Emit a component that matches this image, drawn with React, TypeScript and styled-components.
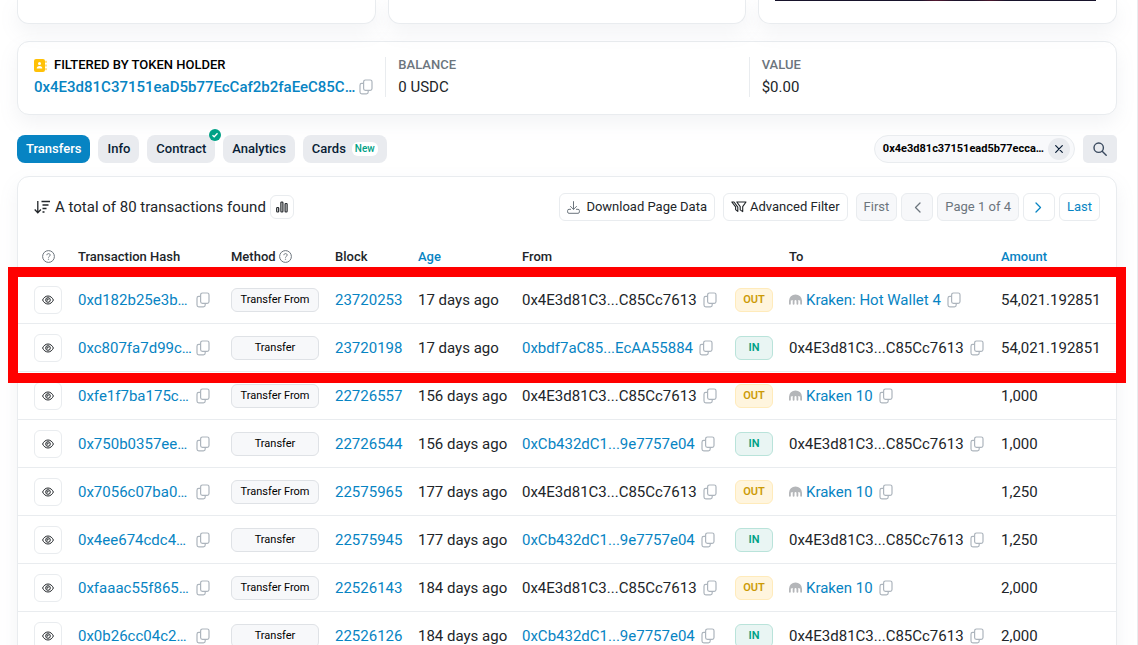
import React from "react";
import styled, { createGlobalStyle, css } from "styled-components";

const c = {
  link: "#0784c3",
  text: "#212529",
  muted: "#6c757d",
  line: "#e9ecef",
  soft: "#f7f8fa",
  tab: "#e9ebef",
  green: "#00a186",
};

const GlobalStyle = createGlobalStyle`
  * { box-sizing: border-box; }
  body {
    margin: 0;
    background: #fff;
    color: ${c.text};
    font-family: Roboto, "Liberation Sans", sans-serif;
    font-size: 15px;
    line-height: 20px;
  }
  button { font: inherit; color: inherit; cursor: pointer; }
  a { color: ${c.link}; text-decoration: none; }
  svg { display: block; flex: none; }
`;

const Page = styled.main`
  height: 100vh;
  overflow: hidden;
  padding: 0 20px 0 17px;
  border-right: 1px solid ${c.line};
`;

const cardLook = css`
  background: #fff;
  border: 1px solid ${c.line};
  border-radius: 12px;
  box-shadow: 0 8px 19px rgba(130, 140, 160, 0.1);
`;

const Summary = styled.section`
  display: grid;
  grid-template-columns: repeat(3, 1fr);
  gap: 12px;
`;

const SummaryCard = styled.div`
  ${cardLook}
  height: 24px;
  padding: 0 20px 0 16px;
  border-top: 0;
  border-radius: 0 0 12px 12px;
`;

const Banner = styled.div`
  height: 1px;
  background: linear-gradient(90deg, #17132b 0 45%, #54172f 50%, #1c132b 56% 62%, #4a162c 67%, #17132b 72%);
`;

const HolderCard = styled.section`
  ${cardLook}
  display: grid;
  grid-template-columns: repeat(3, 1fr);
  margin-top: 17px;
  padding: 15px 4px 17px;
`;

const HolderCell = styled.div`
  min-width: 0;
  padding: 0 12px;
  & + & { border-left: 1px solid ${c.line}; }
`;

const HolderLabel = styled.h2<{ $strong?: boolean }>`
  display: flex;
  align-items: center;
  gap: 7px;
  margin: 0 0 4px;
  font-size: 13px;
  line-height: 16px;
  font-weight: 500;
  color: ${(p) => (p.$strong ? "#000" : c.muted)};
`;

const HolderValue = styled.div`
  display: flex;
  align-items: center;
  justify-content: space-between;
  height: 20px;
  a { font-weight: 500; }
`;

const TabBar = styled.div`
  display: flex;
  align-items: center;
  justify-content: space-between;
  margin-top: 20px;
`;

const Tabs = styled.nav`
  display: flex;
  gap: 8px;
`;

const Tab = styled.button<{ $active?: boolean }>`
  position: relative;
  display: flex;
  align-items: center;
  gap: 6px;
  height: 28px;
  padding: 0 9px;
  border: 0;
  border-radius: 8px;
  font-size: 13px;
  font-weight: 500;
  color: ${(p) => (p.$active ? "#fff" : "#081d35")};
  background: ${(p) => (p.$active ? c.link : c.tab)};
`;

const NewPill = styled.span`
  padding: 0 3px;
  border-radius: 6px;
  background: #fff;
  color: ${c.green};
  font-size: 10px;
  line-height: 14px;
`;

const Verified = styled.span`
  position: absolute;
  top: -6px;
  right: -6px;
`;

const SearchGroup = styled.div`
  display: flex;
  align-items: center;
  gap: 8px;
`;

const Chip = styled.div`
  display: flex;
  align-items: center;
  gap: 4px;
  height: 28px;
  padding: 0 4px 0 8px;
  border: 1px solid ${c.line};
  border-radius: 14px;
  background: #f8f9fb;
  color: #000;
  font-size: 11px;
  font-weight: 700;
`;

const ClearButton = styled.button`
  display: grid;
  place-items: center;
  width: 22px;
  height: 22px;
  padding: 0;
  border: 0;
  border-radius: 50%;
  background: ${c.tab};
`;

const SearchButton = styled.button`
  display: grid;
  place-items: center;
  width: 34px;
  height: 28px;
  padding: 0;
  border: 0;
  border-radius: 5px;
  background: ${c.tab};
`;

const TransfersCard = styled.section`
  ${cardLook}
  margin-top: 13px;
`;

const Toolbar = styled.div`
  display: flex;
  align-items: center;
  justify-content: space-between;
  padding: 16px;
`;

const Total = styled.div`
  display: flex;
  align-items: center;
  gap: 4px;
`;

const SquareButton = styled.button<{ $size: number }>`
  display: grid;
  place-items: center;
  width: ${(p) => p.$size}px;
  height: ${(p) => p.$size}px;
  padding: 0;
  border: 1px solid ${c.line};
  border-radius: 6px;
  background: #fff;
`;

const Actions = styled.div`
  display: flex;
  gap: 8px;
`;

const Pager = styled.nav`
  display: flex;
  gap: 4px;
`;

const ToolButton = styled.button<{ $link?: boolean; $tight?: boolean }>`
  display: flex;
  align-items: center;
  justify-content: center;
  gap: ${(p) => (p.$tight ? 3 : 6)}px;
  height: 28px;
  min-width: 32px;
  padding: 0 7px;
  border: 1px solid ${c.line};
  border-radius: 6px;
  background: #fff;
  font-size: 13px;
  color: ${(p) => (p.$link ? c.link : c.text)};
  white-space: nowrap;
  &:disabled { background: ${c.soft}; color: ${c.muted}; cursor: default; }
`;

const TableArea = styled.div`
  position: relative;
`;

const Table = styled.table`
  width: 100%;
  border-collapse: separate;
  border-spacing: 0;
  table-layout: fixed;
`;

const Head = styled.th<{ $link?: boolean }>`
  height: 39px;
  padding: 0 8px;
  text-align: left;
  font-size: 13px;
  font-weight: 500;
  white-space: nowrap;
  color: ${(p) => (p.$link ? c.link : c.text)};
  &:first-child { padding: 0 8px 0 16px; }
`;

const Cell = styled.td`
  height: 48px;
  padding: 0 8px;
  border-bottom: 1px solid ${c.line};
  white-space: nowrap;
  &:first-child { padding-left: 16px; }
`;

const HeadInner = styled.span<{ $center?: boolean }>`
  display: flex;
  align-items: center;
  gap: 3px;
  justify-content: ${(p) => (p.$center ? "center" : "flex-start")};
`;

const Inline = styled.span<{ $tight?: boolean }>`
  display: flex;
  align-items: center;
  gap: ${(p) => (p.$tight ? 4 : 6)}px;
`;

const HashLine = styled.span`
  display: flex;
  align-items: center;
  justify-content: space-between;
  width: 132px;
`;

const Method = styled.span`
  display: block;
  width: 88px;
  border: 1px solid #dfe2e6;
  border-radius: 6px;
  background: ${c.soft};
  color: #000;
  font-size: 11px;
  line-height: 22px;
  text-align: center;
`;

const Direction = styled.span<{ $out: boolean }>`
  display: block;
  width: 38px;
  border: 1px solid ${(p) => (p.$out ? "#ffebbb" : "#b9e3da")};
  border-radius: 6px;
  background: ${(p) => (p.$out ? "#fff5de" : "#e9f5f3")};
  color: ${(p) => (p.$out ? "#cc9a06" : c.green)};
  font-size: 11px;
  font-weight: 600;
  line-height: 22px;
  text-align: center;
`;

const IconButton = styled.button`
  display: block;
  padding: 0;
  border: 0;
  background: none;
  color: #adb5bd;
`;

const Highlight = styled.div`
  position: absolute;
  top: 30px;
  left: -10px;
  right: -10px;
  height: 116px;
  border: 10px solid #f00;
  pointer-events: none;
`;

const CopyIcon = () => (
  <svg width="14" height="16" viewBox="0 0 14 16" fill="none" stroke="currentColor" strokeWidth="1.2">
    <rect x="4.6" y="1" width="8.4" height="10.4" rx="1.8" />
    <path d="M4.6 4.4H2.8A1.8 1.8 0 0 0 1 6.2v6.8a1.8 1.8 0 0 0 1.8 1.8h4.6A1.8 1.8 0 0 0 9.2 13v-1.6" />
  </svg>
);

const Copy = () => (
  <IconButton type="button" aria-label="Copy address">
    <CopyIcon />
  </IconButton>
);

const EyeIcon = () => (
  <svg width="12" height="10" viewBox="0 0 12 10" fill="none" stroke="currentColor" strokeWidth="1">
    <path d="M.6 5C1.7 2.6 3.6 1 6 1s4.300 1.600 5.400 4C10.300 7.400 8.400 9 6 9S1.700 7.400.6 5Z" />
    <circle cx="6" cy="5" r="2.300" />
    <path d="M6 3.600v1.400H4.600" />
  </svg>
);

const HelpIcon = () => (
  <svg width="13" height="13" viewBox="0 0 13 13" fill="none" stroke="#6c757d" strokeWidth="1">
    <circle cx="6.500" cy="6.500" r="5.900" />
    <path d="M4.900 5.200c0-1 .7-1.600 1.600-1.600s1.700.6 1.700 1.500c0 1.200-1.700 1.200-1.700 2.500" />
    <circle cx="6.500" cy="9.200" r=".35" fill="#6c757d" strokeWidth=".5" />
  </svg>
);

const ContactIcon = () => (
  <svg width="13" height="13" viewBox="0 0 13 13">
    <rect x="0" y="0" width="11" height="13" rx="2" fill="#ffc107" />
    <path d="M12 1.800v2M12 5.500v2M12 9.200v2" stroke="#ffc107" strokeWidth="1" />
    <circle cx="5.500" cy="4.600" r="1.500" fill="#fff" />
    <path d="M2.700 9.600c0-1.500 1-2.500 2.800-2.500s2.800 1 2.800 2.500Z" fill="#fff" />
  </svg>
);

const CheckIcon = () => (
  <svg width="12" height="12" viewBox="0 0 12 12">
    <circle cx="6" cy="6" r="6" fill="#00a186" />
    <path d="m3.500 6.200 1.700 1.600 3.300-3.500" fill="none" stroke="#fff" strokeWidth="1.300" />
  </svg>
);

const CloseIcon = () => (
  <svg width="8" height="8" viewBox="0 0 8 8" stroke="#081d35" strokeWidth="1.200" strokeLinecap="round">
    <path d="M.7.7 7.300 7.300M7.300.7.7 7.300" />
  </svg>
);

const SearchIcon = () => (
  <svg width="14" height="14" viewBox="0 0 14 14" fill="none" stroke="#3a4a5f" strokeWidth="1.400" strokeLinecap="round">
    <circle cx="5.700" cy="5.700" r="4.700" />
    <path d="m9.200 9.200 4 4" />
  </svg>
);

const SortIcon = () => (
  <svg width="17" height="14" viewBox="0 0 17 14" fill="none" stroke="currentColor" strokeWidth="1.300">
    <path d="M3.800 1v11.500M.7 9.500l3.100 3.200 3.100-3.200M7.500 1.500H16M8.500 5h6M8.500 8.500h4M8.500 12h2" />
  </svg>
);

const ChartIcon = () => (
  <svg width="12" height="12" viewBox="0 0 12 12" fill="none" stroke="currentColor" strokeWidth="1.200">
    <rect x=".7" y="6.500" width="2" height="4.500" rx=".8" />
    <rect x="4.900" y="1" width="2" height="10" rx=".8" />
    <rect x="9.100" y="2.500" width="2" height="8.500" rx=".8" />
  </svg>
);

const DownloadIcon = () => (
  <svg width="13" height="13" viewBox="0 0 13 13" fill="none" stroke="#6c757d" strokeWidth="1" strokeLinecap="round" strokeLinejoin="round">
    <path d="M6.500.6v7.600M3.500 5.400l3 3 3-3" />
    <path d="M3.600 8.300H2A1.400 1.400 0 0 0 .6 9.700v1.200A1.400 1.400 0 0 0 2 12.300h9a1.400 1.400 0 0 0 1.400-1.400V9.700A1.400 1.400 0 0 0 11 8.300H9.400" />
  </svg>
);

const FilterIcon = () => (
  <svg width="16" height="12" viewBox="0 0 16 12" fill="none" stroke="currentColor" strokeWidth="1.100" strokeLinejoin="round" strokeLinecap="round">
    <path d="M5.800 1H15l-3.300 4.600v5L9.200 8.900V5.600Z" />
    <path d="M3 1H.8l3.800 4.900v2.700l2.200 1.800V6.100L3 1" />
  </svg>
);

const Chevron = ({ right }: { right?: boolean }) => (
  <svg width="7" height="11" viewBox="0 0 7 11" fill="none" stroke="currentColor" strokeWidth="1.300" strokeLinecap="round" strokeLinejoin="round">
    <path d={right ? "m1 1 4.500 4.500L1 10" : "M6 1 1.500 5.500 6 10"} />
  </svg>
);

const KrakenIcon = () => (
  <svg width="13" height="11" viewBox="0 0 13 11" fill="none" stroke="#b4b6b9" strokeWidth="1.800" strokeLinecap="round">
    <path d="M0 6.800a6.500 6.300 0 0 1 13 0H10.800a1 1 0 0 0-1.900 0H7.400a.9.900 0 0 0-1.800 0H4.100a1 1 0 0 0-1.900 0Z" fill="#b4b6b9" stroke="none" />
    <path d="M.9 6.800v3M4.600 6.800v3M8.400 6.800v3M12.100 6.800v3" />
  </svg>
);

type Transfer = {
  hash: string;
  block: string;
  age: string;
  out: boolean;
  party: string;
  amount: string;
};

const HOLDER = "0x4E3d81C3...C85Cc7613";

const transfers: Transfer[] = [
  { hash: "0xd182b25e3b…", block: "23720253", age: "17 days ago", out: true, party: "Kraken: Hot Wallet 4", amount: "54,021.192851" },
  { hash: "0xc807fa7d99c…", block: "23720198", age: "17 days ago", out: false, party: "0xbdf7aC85...EcAA55884", amount: "54,021.192851" },
  { hash: "0xfe1f7ba175c…", block: "22726557", age: "156 days ago", out: true, party: "Kraken 10", amount: "1,000" },
  { hash: "0x750b0357ee…", block: "22726544", age: "156 days ago", out: false, party: "0xCb432dC1...9e7757e04", amount: "1,000" },
  { hash: "0x7056c07ba0…", block: "22575965", age: "177 days ago", out: true, party: "Kraken 10", amount: "1,250" },
  { hash: "0x4ee674cdc4…", block: "22575945", age: "177 days ago", out: false, party: "0xCb432dC1...9e7757e04", amount: "1,250" },
  { hash: "0xfaaac55f865…", block: "22526143", age: "184 days ago", out: true, party: "Kraken 10", amount: "2,000" },
  { hash: "0x0b26cc04c2…", block: "22526126", age: "184 days ago", out: false, party: "0xCb432dC1...9e7757e04", amount: "2,000" },
];

const Col = styled.col<{ $w: number }>`
  width: ${(p) => p.$w}px;
`;

const columnWidths = [52, 153, 104, 83, 104, 213, 54, 212, 123];

const Row = ({ t }: { t: Transfer }) => (
  <tr>
    <Cell>
      <SquareButton type="button" $size={28} aria-label="Preview transaction">
        <EyeIcon />
      </SquareButton>
    </Cell>
    <Cell>
      <HashLine>
        <a href="#tx">{t.hash}</a>
        <Copy />
      </HashLine>
    </Cell>
    <Cell>
      <Method>{t.out ? "Transfer From" : "Transfer"}</Method>
    </Cell>
    <Cell>
      <a href="#block">{t.block}</a>
    </Cell>
    <Cell>{t.age}</Cell>
    <Cell>
      <Inline>
        {t.out ? <span>{HOLDER}</span> : <a href="#from">{t.party}</a>}
        <Copy />
      </Inline>
    </Cell>
    <Cell>
      <Direction $out={t.out}>{t.out ? "OUT" : "IN"}</Direction>
    </Cell>
    <Cell>
      <Inline>
        {t.out ? (
          <Inline $tight>
            <KrakenIcon />
            <a href="#to">{t.party}</a>
          </Inline>
        ) : (
          <span>{HOLDER}</span>
        )}
        <Copy />
      </Inline>
    </Cell>
    <Cell>{t.amount}</Cell>
  </tr>
);

export default function App() {
  return (
    <>
      <GlobalStyle />
      <Page>
        <Summary>
          <SummaryCard />
          <SummaryCard />
          <SummaryCard>
            <Banner />
          </SummaryCard>
        </Summary>

        <HolderCard>
          <HolderCell>
            <HolderLabel $strong>
              <ContactIcon />
              FILTERED BY TOKEN HOLDER
            </HolderLabel>
            <HolderValue>
              <a href="#holder">0x4E3d81C37151eaD5b77EcCaf2b2faEeC85C…</a>
              <Copy />
            </HolderValue>
          </HolderCell>
          <HolderCell>
            <HolderLabel>BALANCE</HolderLabel>
            <HolderValue>0 USDC</HolderValue>
          </HolderCell>
          <HolderCell>
            <HolderLabel>VALUE</HolderLabel>
            <HolderValue>$0.00</HolderValue>
          </HolderCell>
        </HolderCard>

        <TabBar>
          <Tabs>
            <Tab type="button" $active>Transfers</Tab>
            <Tab type="button">Info</Tab>
            <Tab type="button">
              Contract
              <Verified><CheckIcon /></Verified>
            </Tab>
            <Tab type="button">Analytics</Tab>
            <Tab type="button">
              Cards
              <NewPill>New</NewPill>
            </Tab>
          </Tabs>
          <SearchGroup>
            <Chip>
              0x4e3d81c37151ead5b77ecca…
              <ClearButton type="button" aria-label="Clear filter"><CloseIcon /></ClearButton>
            </Chip>
            <SearchButton type="button" aria-label="Search"><SearchIcon /></SearchButton>
          </SearchGroup>
        </TabBar>

        <TransfersCard>
          <Toolbar>
            <Total>
              <SortIcon />
              A total of 80 transactions found
              <SquareButton type="button" $size={24} aria-label="Show chart"><ChartIcon /></SquareButton>
            </Total>
            <Actions>
              <ToolButton type="button"><DownloadIcon />Download Page Data</ToolButton>
              <ToolButton type="button" $tight><FilterIcon />Advanced Filter</ToolButton>
              <Pager aria-label="Pages">
                <ToolButton type="button" disabled>First</ToolButton>
                <ToolButton type="button" disabled aria-label="Previous"><Chevron /></ToolButton>
                <ToolButton type="button" disabled>Page 1 of 4</ToolButton>
                <ToolButton type="button" $link aria-label="Next"><Chevron right /></ToolButton>
                <ToolButton type="button" $link>Last</ToolButton>
              </Pager>
            </Actions>
          </Toolbar>

          <TableArea>
            <Table>
              <colgroup>
                {columnWidths.map((w, i) => <Col key={i} $w={w} />)}
              </colgroup>
              <thead>
                <tr>
                  <Head aria-label="Preview"><HeadInner $center><HelpIcon /></HeadInner></Head>
                  <Head>Transaction Hash</Head>
                  <Head><HeadInner>Method<HelpIcon /></HeadInner></Head>
                  <Head>Block</Head>
                  <Head $link>Age</Head>
                  <Head>From</Head>
                  <Head aria-label="Direction" />
                  <Head>To</Head>
                  <Head $link>Amount</Head>
                </tr>
              </thead>
              <tbody>
                {transfers.map((t) => <Row key={t.hash} t={t} />)}
              </tbody>
            </Table>
            <Highlight />
          </TableArea>
        </TransfersCard>
      </Page>
    </>
  );
}
